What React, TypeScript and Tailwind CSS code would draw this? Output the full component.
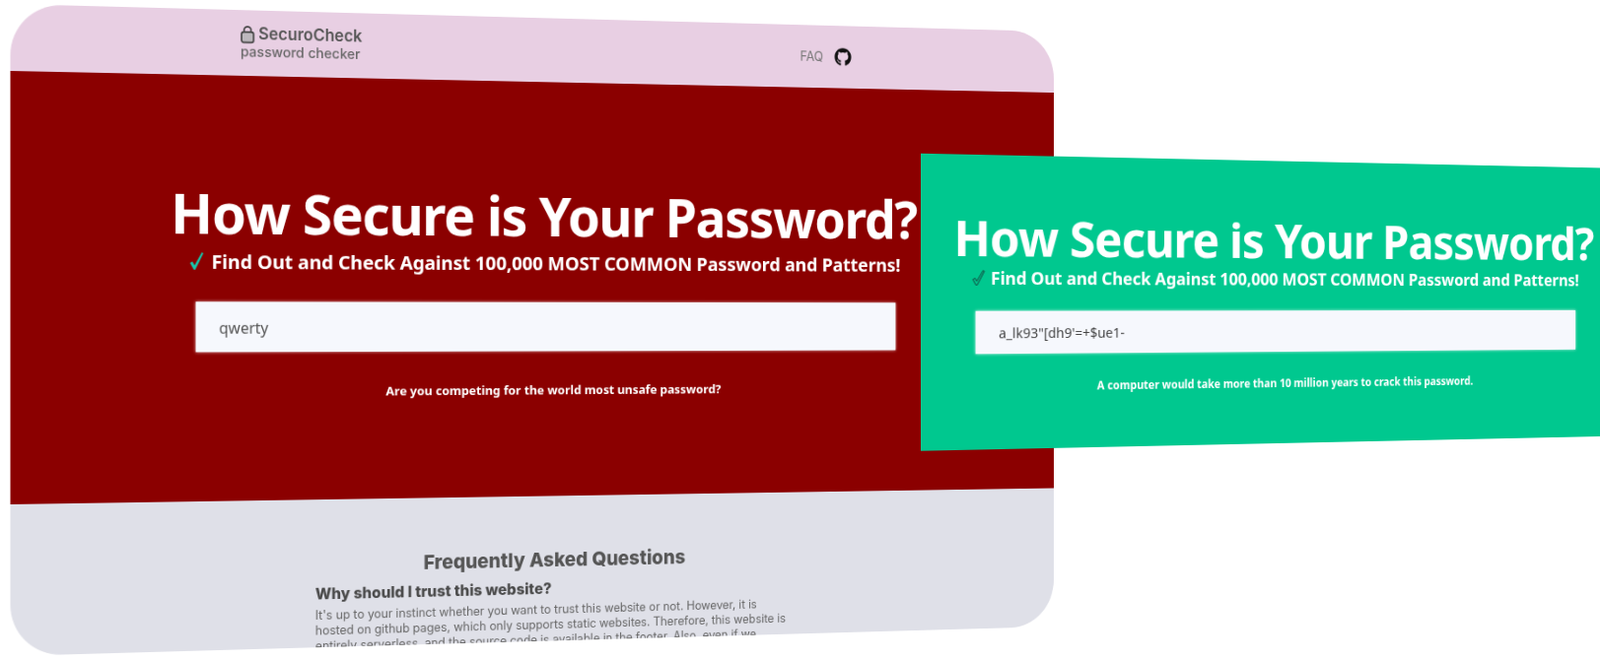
import { FaGithub } from "react-icons/fa";

const headingFont = "font-['Noto_Sans',sans-serif]";
const siteFont = "font-['Inter',sans-serif]";

function LockIcon() {
  return (
    <svg viewBox="0 0 16 20" className="h-[20px] w-[15px]" aria-hidden="true">
      <path d="M4 9V5.5a4 4 0 0 1 8 0V9" fill="none" stroke="#444" strokeWidth="1.8" />
      <rect x="1.2" y="7.5" width="13.6" height="11.5" rx="2.5" fill="#bdb8bd" stroke="#444" strokeWidth="1.8" />
    </svg>
  );
}

function Check({ outlined, className }: { outlined?: boolean; className: string }) {
  return (
    <svg viewBox="0 0 16 20" className={className} aria-hidden="true">
      {outlined ? (
        <path d="M1.5 12 L4 10.5 L6 14 L13.5 1.5 L15 2.5 L6.5 18.5 L5 18.5 Z" fill="none" stroke="#14463c" strokeWidth="1.1" />
      ) : (
        <path d="M1 12 L3.5 10.5 L5.8 14.5 L13.5 1 L15 2 L6.5 19 L5 19 Z" fill="#14c8ad" />
      )}
    </svg>
  );
}

function Hero({ outlined, password, message, compact }: { outlined?: boolean; password: string; message: string; compact?: boolean }) {
  return (
    <div className={`flex flex-col items-center ${headingFont} text-white`}>
      <h1 className={compact ? "text-[50px] leading-[60px] font-bold tracking-[-0.9px] whitespace-nowrap" : "text-[58px] leading-[70px] font-bold tracking-[-1.3px] whitespace-nowrap"}>
        How Secure is Your Password?
      </h1>
      <p className={compact ? "flex items-center gap-[6px] text-[17.7px] leading-[22px] font-bold tracking-[-0.1px] whitespace-nowrap" : "mt-[2px] flex items-center gap-[7px] text-[20.4px] leading-[26px] font-bold tracking-[-0.1px] whitespace-nowrap"}>
        <Check outlined={outlined} className={compact ? "h-[18px] w-[14px]" : "h-[20px] w-[16px]"} />
        Find Out and Check Against 100,000 MOST COMMON Password and Patterns!
      </p>
      <div
        className={
          compact
            ? "mt-[23px] flex h-[44px] w-[677px] items-center bg-[#f6f8fd] pl-[24px] text-[14px] text-[#444] shadow-[0_0_3px_rgba(255,255,255,0.8)]"
            : "mt-[29px] flex h-[52px] w-[779px] items-center bg-[#f6f8fd] pl-[25px] pt-[2px] text-[16px] text-[#555] shadow-[0_0_3px_rgba(255,255,255,0.8)]"
        }
      >
        {password}
      </div>
      <p className={compact ? "mt-[25px] pl-[3px] text-[11.5px] leading-[18px] font-bold" : "mt-[31px] text-[13.25px] leading-[20px] font-bold"}>{message}</p>
    </div>
  );
}

export default function App() {
  return (
    <div className="relative h-screen w-screen overflow-hidden bg-white">
      {/* Main page mockup */}
      <div className="absolute top-0 left-0 flex h-[662px] w-[1160px] origin-top-left flex-col overflow-hidden rounded-[52px] blur-[0.5px] [transform:matrix3d(1.00087,0.02679,0,0.00008276,0,1,0,0,0,0,1,0,10.5,4,0,1)]">
        <header className={`flex h-[68px] shrink-0 items-start justify-between bg-[#e8cfe3] pt-[14px] pr-[242px] pl-[238px] ${siteFont} text-[#555]`}>
          <div className="flex flex-col">
            <div className="flex items-center gap-[4px] text-[17px] leading-[21px] font-semibold">
              <LockIcon />
              SecuroCheck
            </div>
            <span className="text-[14.5px] leading-[16px] font-medium text-[#666]">password checker</span>
          </div>
          <nav className="mt-[9px] flex items-center gap-[13px]">
            <a className="text-[14px] text-[#777]">FAQ</a>
            <FaGithub className="h-[20px] w-[20px] text-[#111]" />
          </nav>
        </header>

        <section className="h-[440px] shrink-0 bg-[#8b0000] pt-[107px]">
          <Hero password="qwerty" message="Are you competing for the world most unsafe password?" />
        </section>

        <section className={`flex-1 bg-[#dfe0e8] pt-[53px] ${siteFont} text-[#555]`}>
          <div className="mx-auto w-[525px]">
            <h2 className="text-center text-[20.8px] leading-[30px] font-extrabold">Frequently Asked Questions</h2>
            <h3 className="mt-[3px] text-[16.3px] leading-[24px] font-extrabold text-[#4a4a4a]">Why should I trust this website?</h3>
            <p className="mt-[3px] text-[12.75px] leading-[16px] text-[#666]">
              It's up to your instinct whether you want to trust this website or not. However, it is hosted on github pages, which only supports static websites. Therefore, this website is entirely serverless, and the source code is available in the footer. Also, even if we
            </p>
          </div>
        </section>
      </div>

      {/* Result panel laid over the page */}
      <div className="absolute top-0 left-0 h-[301.5px] w-[789px] origin-top-left bg-[#00c88f] pt-[55px] blur-[0.4px] [transform:matrix3d(1.13207,0.04334,0,0.0001414,0,1,0,0,0,0,1,0,934,155.75,0,1)]">
        <Hero outlined compact password={`a_lk93"[dh9'=+$ue1-`} message="A computer would take more than 10 million years to crack this password." />
      </div>
    </div>
  );
}
